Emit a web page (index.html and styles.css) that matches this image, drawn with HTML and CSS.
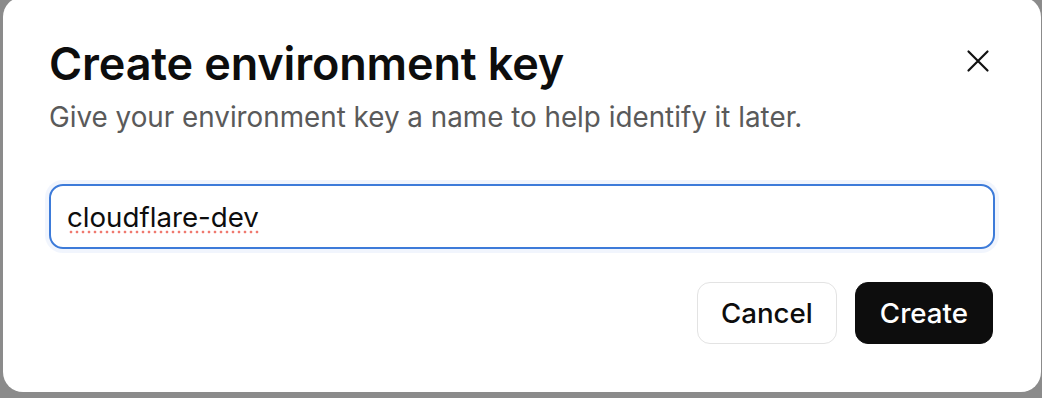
FILE: index.html
```html
<!DOCTYPE html>
<html lang="en">
<head>
<meta charset="utf-8">
<title>Create environment key</title>
<link rel="stylesheet" href="styles.css">
</head>
<body>
<div class="dialog" role="dialog" aria-labelledby="dlg-title">
  <div class="header">
    <div class="heading">
      <h1 id="dlg-title" class="title">Create environment key</h1>
      <p class="subtitle">Give your environment key a name to help identify it later.</p>
    </div>
    <button class="close" aria-label="Close">
      <svg width="24" height="24" viewBox="0 0 24 24" fill="none" stroke="#111" stroke-width="2.2" stroke-linecap="round">
        <path d="M2.5 2.5 L21.5 21.5 M21.5 2.5 L2.5 21.5"/>
      </svg>
    </button>
  </div>
  <div class="field"><span class="value">cloudflare-dev</span></div>
  <div class="actions">
    <button class="btn btn-secondary">Cancel</button>
    <button class="btn btn-primary">Create</button>
  </div>
</div>
</body>
</html>
```

FILE: styles.css
```css
* { box-sizing: border-box; }
html, body {
  margin: 0;
  padding: 0;
  height: 100%;
  overflow: hidden;
}
body {
  background: #8b8b8b;
  font-family: Inter, "Liberation Sans", sans-serif;
  color: #0d0d0d;
}
.dialog {
  margin: -3px 0 0 3px;
  width: 1038px;
  height: 395px;
  background: #fff;
  border-radius: 20px;
  padding: 40px 46px 0 46px;
  display: flex;
  flex-direction: column;
}
.header {
  display: flex;
  justify-content: space-between;
  align-items: flex-start;
}
.title {
  margin: 0;
  font-size: 45px;
  line-height: 54px;
  font-weight: 600;
  letter-spacing: -0.15px;
}
.subtitle {
  margin: 9px 0 0 0;
  font-size: 27.8px;
  line-height: 34px;
  color: #5a5a5a;
}
.close {
  margin: 12px 5px 0 0;
  padding: 0;
  border: 0;
  background: none;
  width: 24px;
  height: 24px;
  display: flex;
}
.field {
  margin-top: 50px;
  height: 65px;
  border: 2px solid #3d7bd9;
  border-radius: 14px;
  box-shadow: 0 0 0 4px rgba(80, 130, 230, 0.08);
  padding: 0 16px;
  display: flex;
  align-items: center;
  font-size: 27.7px;
}
.value {
  background-image: radial-gradient(circle, #f0796f 1.1px, rgba(240, 121, 111, 0) 1.7px);
  background-size: 6px 4px;
  background-repeat: repeat-x;
  background-position: 1px 100%;
}
.actions {
  margin-top: 33px;
  display: flex;
  justify-content: flex-end;
  gap: 18px;
  padding-right: 2px;
}
.btn {
  height: 62px;
  padding: 0 23px;
  border-radius: 13px;
  font-family: inherit;
  font-size: 27.7px;
  font-weight: 500;
}
.btn-secondary {
  background: #fff;
  border: 1.5px solid #e3e3e3;
  color: #0d0d0d;
}
.btn-primary {
  padding: 0 24px;
  background: #0d0d0d;
  border: 1.5px solid #0d0d0d;
  color: #fff;
}
```
